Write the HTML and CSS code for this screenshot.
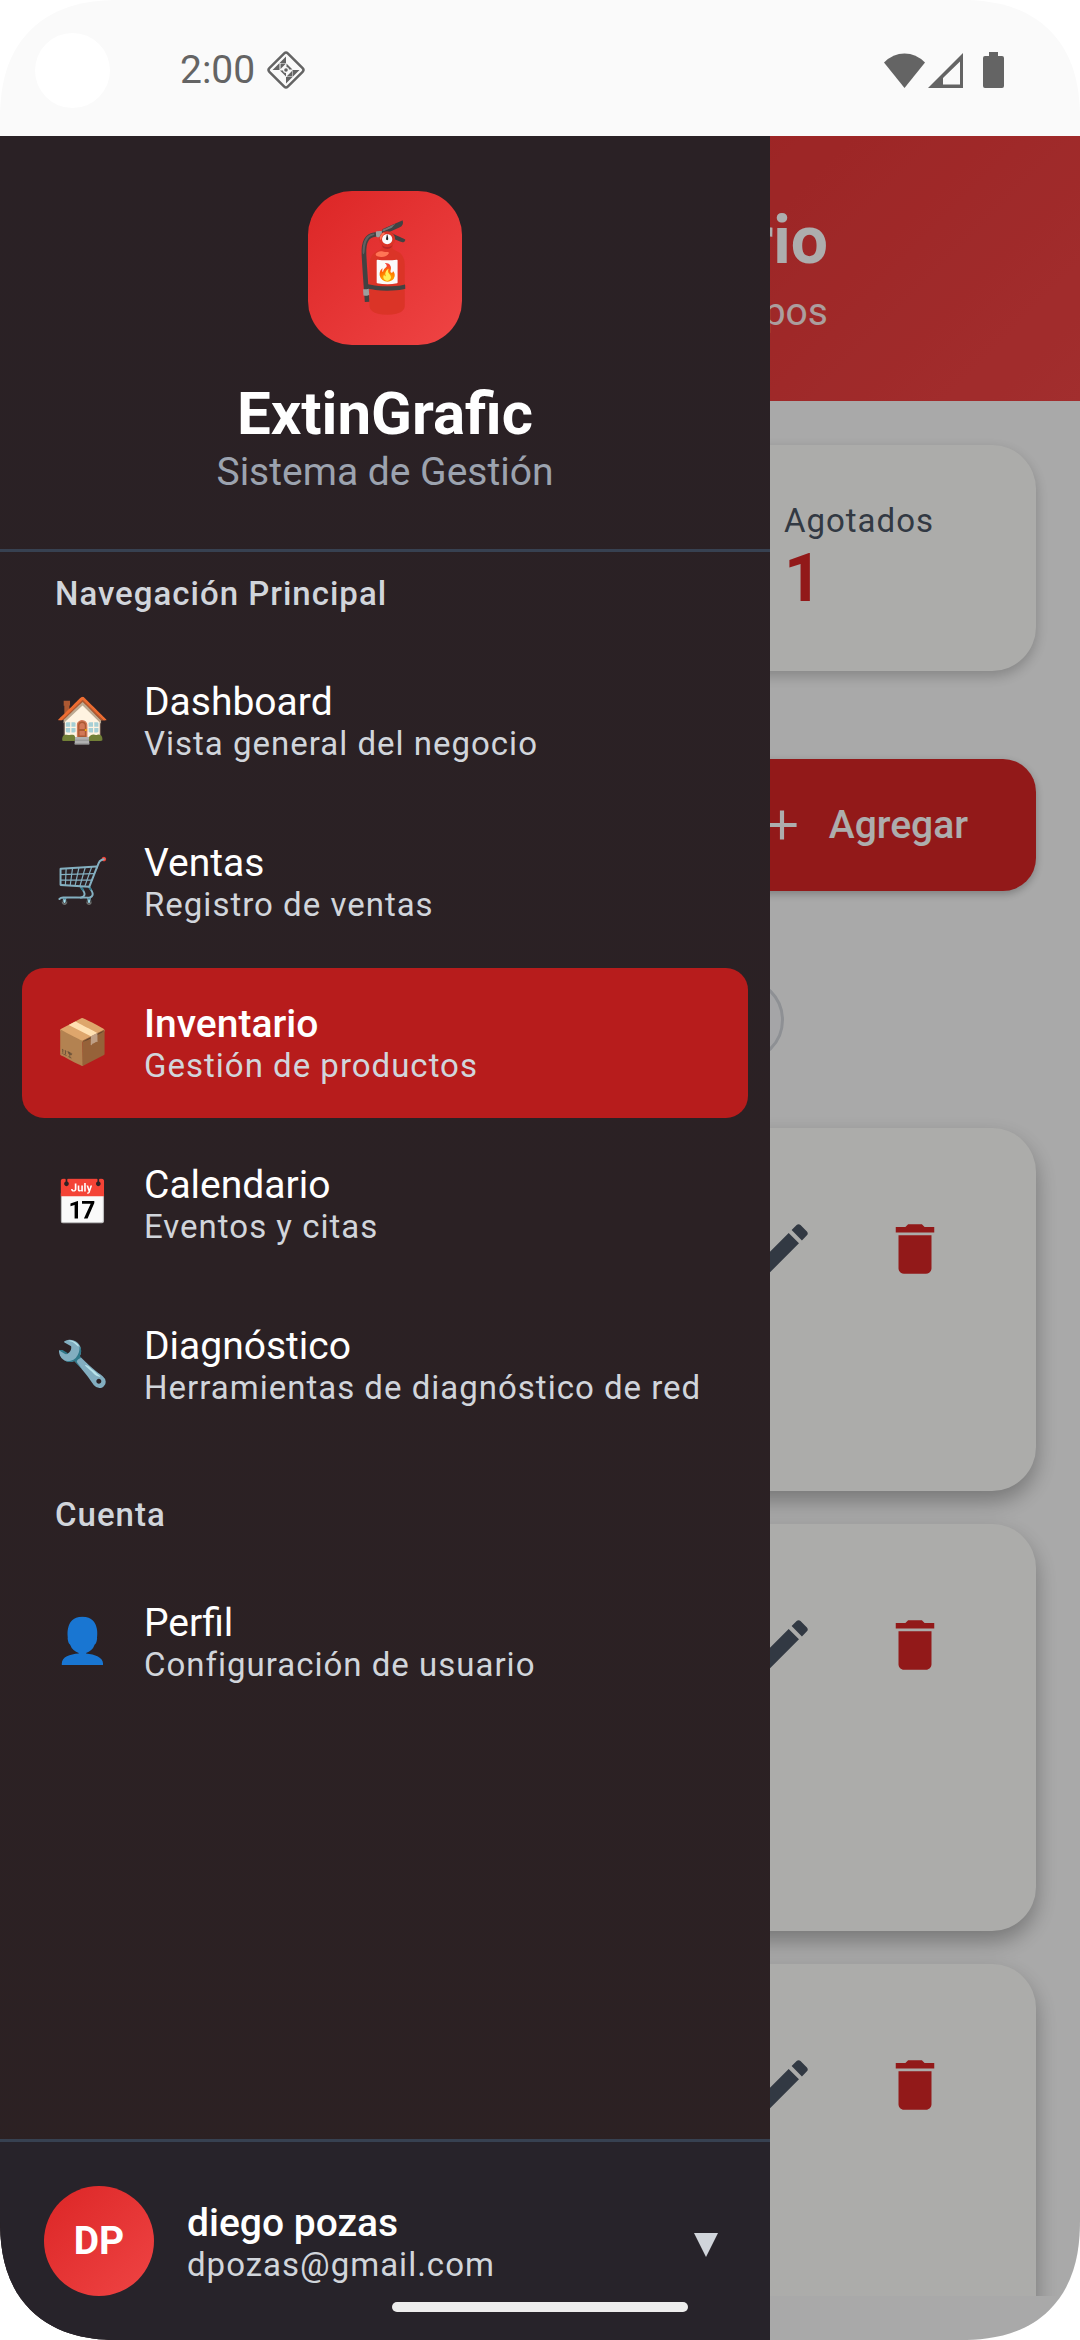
FILE: index.html
```html
<!DOCTYPE html>
<html lang="es">
<head>
<meta charset="utf-8">
<meta name="viewport" content="width=device-width, initial-scale=1">
<title>ExtinGrafic</title>
<link rel="stylesheet" href="styles.css">
</head>
<body>
<svg class="sprite" aria-hidden="true">
  <symbol id="i-edit" viewBox="0 0 24 24"><path d="M3 17.25V21h3.750L17.810 9.940l-3.750-3.750L3 17.250zM20.710 7.040c.39-.39.39-1.020 0-1.410l-2.340-2.340c-.39-.39-1.020-.39-1.410 0l-1.830 1.830 3.750 3.750 1.830-1.830z"/></symbol>
  <symbol id="i-trash" viewBox="0 0 24 24"><path d="M6 19c0 1.100.9 2 2 2h8c1.100 0 2-.9 2-2V7H6v12zM19 4h-3.500l-1-1h-5l-1 1H5v2h14V4z"/></symbol>
</svg>
<div class="screen">
  <header class="status">
    <span class="camera"></span>
    <time class="clock">2:00</time>
    <svg class="debug" viewBox="0 0 40 40" aria-hidden="true">
      <rect x="7" y="7" width="26" height="26" rx="2.500" transform="rotate(45 20 20)" fill="none" stroke="#646464" stroke-width="2.500"/>
      <g fill="#646464">
        <path d="M20 6.500V13h-6.500zM13.500 13v7H6.500zM20 33.500V27h6.500zM26.500 27v-7h7z"/>
        <path d="M14.500 13.500H20L14.500 19zM20.500 13.500l6 6h-6zM14 20.500h6v6zM26 26.500h-5.500l5.500-5.500z"/>
      </g>
      <circle cx="20" cy="20" r="3" fill="#fafafa"/><circle cx="20" cy="20" r="1.800" fill="#646464"/>
    </svg>
    <span class="signals">
      <svg class="wifi" viewBox="0 0 41 35" aria-hidden="true"><path d="M0 9.500Q9 .5 20.500.5T41 9.500L20.500 35z"/></svg>
      <svg class="cell" viewBox="0 0 35 35" aria-hidden="true"><path fill-rule="evenodd" d="M35 0v35H0zM32 8.500L15 25v6.500h17z"/></svg>
      <svg class="battery" viewBox="0 0 21 36" aria-hidden="true"><path d="M6 0h9v4h4q2 0 2 2v28q0 2-2 2H2q-2 0-2-2V6q0-2 2-2h4z"/></svg>
    </span>
  </header>
  <div class="app">
    <main class="page">
      <div class="hero">
        <h1 class="hero-title">Inventario</h1>
        <p class="hero-sub">equipos</p>
      </div>
      <div class="content">
        <section class="card stats">
          <div><p class="stat-label">Agotados</p><p class="stat-value">1</p></div>
        </section>
        <div class="actions">
          <button class="add" type="button"><svg class="add-icon" viewBox="0 0 24 24" aria-hidden="true"><path d="M19 13h-6v6h-2v-6H5v-2h6V5h2v6h6z"/></svg>Agregar</button>
        </div>
        <div class="chips"><button class="chip" type="button" aria-label="Filtro"></button></div>
        <div class="products">
          <article class="card product">
            <button class="icon-btn" type="button" aria-label="Editar"><svg><use href="#i-edit"/></svg></button>
            <button class="icon-btn danger" type="button" aria-label="Eliminar"><svg><use href="#i-trash"/></svg></button>
          </article>
          <article class="card product tall">
            <button class="icon-btn" type="button" aria-label="Editar"><svg><use href="#i-edit"/></svg></button>
            <button class="icon-btn danger" type="button" aria-label="Eliminar"><svg><use href="#i-trash"/></svg></button>
          </article>
          <article class="card product tall">
            <button class="icon-btn" type="button" aria-label="Editar"><svg><use href="#i-edit"/></svg></button>
            <button class="icon-btn danger" type="button" aria-label="Eliminar"><svg><use href="#i-trash"/></svg></button>
          </article>
        </div>
      </div>
    </main>
    <div class="scrim"></div>
    <aside class="drawer">
      <div class="brand">
        <div class="logo">🧯</div>
        <h2 class="brand-name">ExtinGrafic</h2>
        <p class="brand-sub">Sistema de Gestión</p>
      </div>
      <nav class="nav">
        <h3 class="nav-label">Navegación Principal</h3>
        <ul class="nav-list">
          <li><a class="item" href="#"><span class="emoji">🏠</span><span><span class="title">Dashboard</span><span class="sub">Vista general del negocio</span></span></a></li>
          <li><a class="item" href="#"><span class="emoji">🛒</span><span><span class="title">Ventas</span><span class="sub">Registro de ventas</span></span></a></li>
          <li><a class="item active" href="#" aria-current="page"><span class="emoji">📦</span><span><span class="title">Inventario</span><span class="sub">Gestión de productos</span></span></a></li>
          <li><a class="item" href="#"><span class="emoji">📅</span><span><span class="title">Calendario</span><span class="sub">Eventos y citas</span></span></a></li>
          <li><a class="item" href="#"><span class="emoji">🔧</span><span><span class="title">Diagnóstico</span><span class="sub">Herramientas de diagnóstico de red</span></span></a></li>
        </ul>
        <h3 class="nav-label">Cuenta</h3>
        <ul class="nav-list">
          <li><a class="item" href="#"><span class="emoji">👤</span><span><span class="title">Perfil</span><span class="sub">Configuración de usuario</span></span></a></li>
        </ul>
      </nav>
      <button class="account" type="button">
        <span class="avatar">DP</span>
        <span class="who"><span class="title strong">diego pozas</span><span class="sub">dpozas@gmail.com</span></span>
        <svg class="caret" viewBox="0 0 24 32" aria-hidden="true"><path d="M0 8h24L12 32z"/></svg>
      </button>
    </aside>
  </div>
  <span class="home-bar"></span>
</div>
</body>
</html>
```

FILE: styles.css
```css
:root {
  --text-s: 33px;
  --text-m: 39px;
  --text-l: 60px;
  --text-xl: 66px;
  --tracking: 1px;
  --red: #d82626;
  --line: #374151;
  --muted: #d1d5db;
}
* { box-sizing: border-box; margin: 0; padding: 0; }
body { background: #fff; font-family: Roboto, "Noto Sans", sans-serif; }
button { border: 0; background: none; font: inherit; color: inherit; text-align: left; }
ul { list-style: none; }
a { color: inherit; text-decoration: none; }
.sprite { display: none; }

.screen {
  position: relative;
  display: flex;
  flex-direction: column;
  height: 100vh;
  overflow: hidden;
  border-radius: 120px;
  corner-shape: superellipse(1.25);
  background: #fafafa;
}

/* status bar */
.status { display: flex; align-items: center; height: 136px; padding: 4px 76px 0 35px; color: #646464; fill: #646464; }
.camera { width: 75px; height: 75px; border-radius: 50%; background: #fff; }
.clock { margin-left: 70px; font-size: var(--text-m); line-height: 46px; }
.debug { width: 40px; height: 40px; margin-left: 11px; }
.signals { display: flex; align-items: center; margin-left: auto; }
.wifi { width: 41px; height: 35px; }
.cell { width: 35px; height: 35px; margin-left: 3px; }
.battery { width: 21px; height: 36px; margin-left: 20px; }

/* inventory page */
.app { position: relative; flex: 1; min-height: 0; padding-bottom: 44px; }
.page { height: 100%; overflow: hidden; }
.hero { padding: 61px 252px 61px 44px; background: linear-gradient(135deg, #dc2626, #ef4444); text-align: right; }
.hero-title { font-size: var(--text-xl); line-height: 88px; color: #fff; }
.hero-sub { font-size: var(--text-m); line-height: 55px; color: #fde9e9; }
.content { padding: 44px; }
.card {
  border-radius: 44px;
  background: #fefefb;
  box-shadow: 0 10px 22px rgba(0, 0, 0, .3);
}
.stats { display: flex; justify-content: flex-end; padding: 54px 102px 56px 44px; box-shadow: 0 5px 14px rgba(0, 0, 0, .22); }
.stat-label { font-size: var(--text-s); line-height: 44px; letter-spacing: var(--tracking); color: #4b5563; }
.stat-value { font-size: var(--text-xl); line-height: 72px; font-weight: 700; color: var(--red); }
.actions { display: flex; justify-content: flex-end; margin-top: 88px; }
.add {
  display: flex; align-items: center; gap: 22px;
  height: 132px; padding: 0 68px;
  border-radius: 33px;
  background: var(--red);
  box-shadow: 0 3px 8px rgba(0, 0, 0, .25);
  color: #fff;
  font-size: var(--text-m); font-weight: 500;
}
.add-icon { width: 50px; height: 50px; fill: #fff; }
.chips { display: flex; justify-content: flex-end; margin-top: 87px; padding-right: 252px; }
.chip { width: 220px; height: 84px; border: 3px solid #d1d5db; border-radius: 42px; background: #f3f4f6; }
.products { display: flex; flex-direction: column; gap: 33px; margin-top: 66px; }
.product { display: flex; justify-content: flex-end; align-items: flex-start; min-height: 363px; padding: 55px; }
.tall { min-height: 407px; }
.icon-btn { display: grid; place-items: center; width: 132px; height: 132px; fill: #4b5563; }
.icon-btn svg { width: 66px; height: 66px; }
.danger { fill: var(--red); }
.scrim { position: absolute; inset: 0; background: rgba(0, 0, 0, .32); }

/* navigation drawer */
.drawer {
  position: absolute; top: 0; bottom: 0; left: 0;
  display: flex; flex-direction: column;
  width: 770px; max-width: 90%;
  background: linear-gradient(#2a2125, #2c2123);
  color: #fff;
}
.brand { display: flex; flex-direction: column; align-items: center; padding: 55px 44px; border-bottom: 3px solid var(--line); }
.logo {
  display: grid; place-items: center;
  width: 154px; height: 154px;
  border-radius: 44px;
  background: linear-gradient(135deg, #dc2626, #ef4444);
  font-size: 86px;
  line-height: 110px;
}
.brand-name { margin-top: 33px; font-size: var(--text-l); line-height: 72px; }
.brand-sub { font-size: var(--text-m); line-height: 44px; color: #9ca3af; }
.nav { flex: 1; min-height: 0; overflow: hidden; padding: 0 22px; }
.nav-label { padding: 20px 33px 30px; font-size: var(--text-s); line-height: 44px; font-weight: 500; letter-spacing: var(--tracking); color: var(--muted); }
.nav-list { display: flex; flex-direction: column; gap: 11px; margin-bottom: 33px; }
.item { display: flex; align-items: center; gap: 34px; padding: 32px 33px 34px; border-radius: 22px; }
.active { background: #b71c1c; }
.emoji { display: grid; place-items: center; width: 55px; font-size: 44px; line-height: 55px; }
.title, .sub { display: block; }
.title { font-size: var(--text-m); line-height: 48px; }
.sub { font-size: var(--text-s); line-height: 36px; letter-spacing: var(--tracking); color: var(--muted); }
.active .title, .strong { font-weight: 500; }
.account { display: flex; align-items: center; padding: 44px 52px 44px 44px; border-top: 3px solid var(--line); background: #27232a; }
.avatar {
  display: grid; place-items: center;
  width: 110px; height: 110px;
  border-radius: 50%;
  background: linear-gradient(135deg, #dc2626, #ef4444);
  font-size: var(--text-m); font-weight: 700;
}
.who { flex: 1; margin-left: 33px; }
.caret { width: 24px; height: 32px; fill: var(--muted); }

/* gesture handle */
.home-bar { position: absolute; bottom: 28px; left: 50%; width: 296px; height: 10px; margin-left: -148px; border-radius: 5px; background: #ededed; }
```
